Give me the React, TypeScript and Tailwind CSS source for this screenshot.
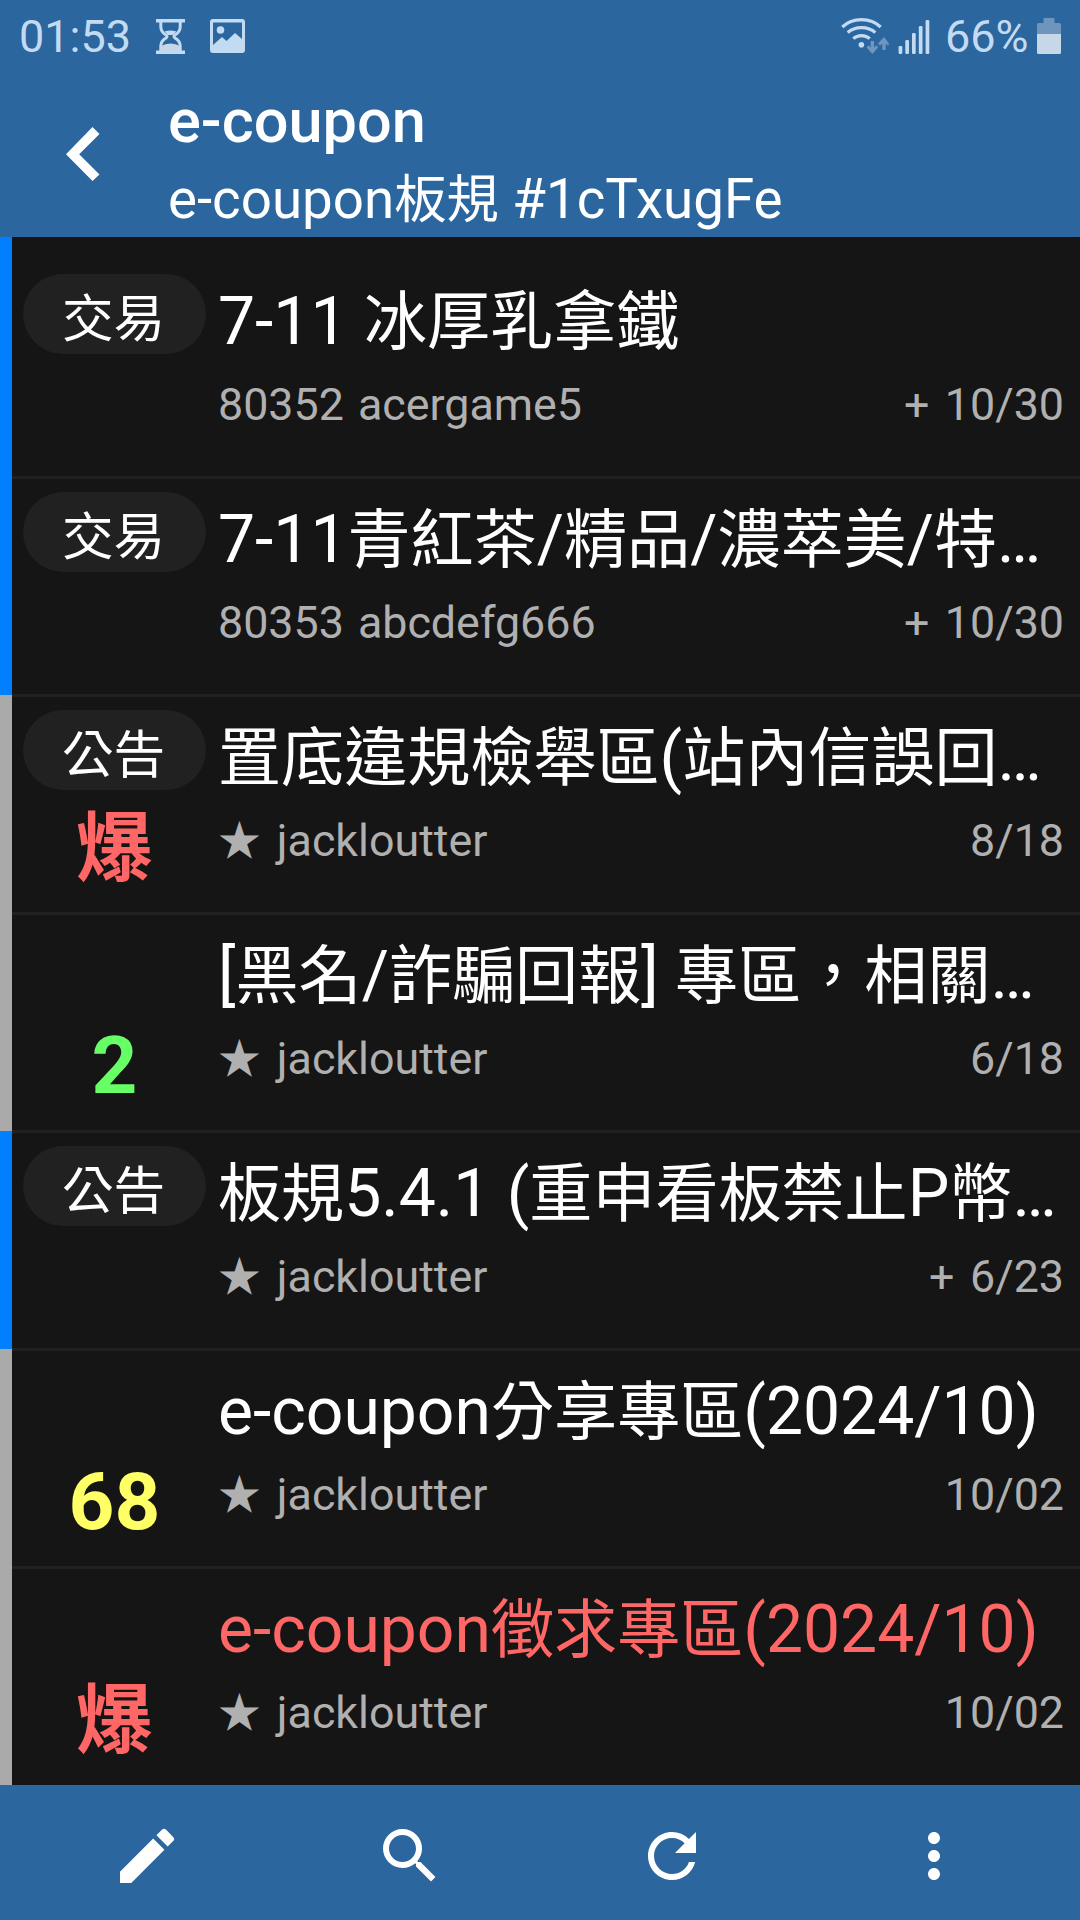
import React from 'react';
import { MdEdit, MdMoreVert, MdRefresh, MdSearch } from 'react-icons/md';

type Post = {
  tag?: string;
  title: string;
  number?: string;
  author: string;
  date: string;
  plus?: boolean;
  score?: string;
  scoreClass?: string;
  titleClass?: string;
};

const posts: Post[] = [
  { tag: '交易', title: '7-11 冰厚乳拿鐵', number: '80352', author: 'acergame5', date: '10/30', plus: true },
  { tag: '交易', title: '7-11青紅茶/精品/濃萃美/特…', number: '80353', author: 'abcdefg666', date: '10/30', plus: true },
  { tag: '公告', title: '置底違規檢舉區(站內信誤回…', author: 'jackloutter', date: '8/18', score: '爆', scoreClass: 'text-[#ff6666]' },
  { title: '[黑名/詐騙回報] 專區，相關…', author: 'jackloutter', date: '6/18', score: '2', scoreClass: 'text-[#66ff66]' },
  { tag: '公告', title: '板規5.4.1 (重申看板禁止P幣…', author: 'jackloutter', date: '6/23', plus: true },
  { title: 'e-coupon分享專區(2024/10)', author: 'jackloutter', date: '10/02', score: '68', scoreClass: 'text-[#ffff66]' },
  { title: 'e-coupon徵求專區(2024/10)', author: 'jackloutter', date: '10/02', score: '爆', scoreClass: 'text-[#ff6666]', titleClass: 'text-[#ff6666]' },
];

// Chinese runs are set slightly smaller than the Latin text around them.
function Mixed({ text }: { text: string }) {
  const parts = text.split(/([\u3000-\u9fff\uff00-\uffef★]+)/).filter(Boolean);
  return (
    <>
      {parts.map((part, i) =>
        /[\u3000-\u9fff\uff00-\uffef★]/.test(part) ? (
          <span key={i} className="text-[0.956em] leading-[0]">{part}</span>
        ) : (
          <React.Fragment key={i}>{part}</React.Fragment>
        ),
      )}
    </>
  );
}

function StatusBar() {
  return (
    <div className="flex h-[72px] items-start justify-between pr-[19px] pl-[19px] text-[45px] leading-[56px] text-[#c3dbf2]">
      <div className="flex pt-[9px]">
        <span className="w-[137px]">01:53</span>
        <svg className="mt-[10px] h-[35px] w-[29px]" viewBox="0 0 29 35" fill="none">
          <path d="M0 0H29V3.500H0ZM0 31.500H29V35H0Z" fill="currentColor" />
          <path d="M4.800 3V8Q5 13 10 16Q12 17.500 10 19Q4.800 22 4.800 27V32M24.200 3V8Q24 13 19 16Q17 17.500 19 19Q24.200 22 24.200 27V32" stroke="currentColor" strokeWidth="3" />
          <path d="M8.500 12.500Q14.500 10.500 20.500 12.500L17 16H12Z" fill="currentColor" />
          <path d="M5 33V27Q9 24.500 14.500 24.500Q20 24.500 24 27V33Z" fill="#c6d8e8" />
        </svg>
        <svg className="mt-[10px] ml-[25px] h-[34px] w-[35px]" viewBox="0 0 35 34">
          <path fillRule="evenodd" fill="currentColor" d="M3 0H32Q35 0 35 3V31Q35 34 32 34H3Q0 34 0 31V3Q0 0 3 0ZM3 3.500V26L12 18L16.500 22L25 14L32 20V3.500Z" />
          <circle cx="10.500" cy="11" r="3.800" fill="currentColor" />
        </svg>
      </div>
      <div className="flex pt-[9px]">
        <svg className="mt-[9px] h-[37px] w-[48px]" viewBox="841 18 48 37" fill="none">
          <g stroke="currentColor" strokeWidth="3.2">
            <path d="M842.300 27Q850 19.600 861.500 19.600T880.700 27" />
            <path d="M847.700 32.700Q853 27.600 861.500 27.600T875.300 32.700" />
            <path d="M853.300 38.700Q856.500 35.600 861.500 35.600T869.700 38.700" />
          </g>
          <circle cx="861.400" cy="44.700" r="2.800" fill="currentColor" />
          <path fill="#6f97be" d="M870.600 41H874V47.500L876.300 45.300L878 47.500L872.300 54L866.700 47.500L868.400 45.300L870.600 47.500ZM882.300 50H885.700V43.500L888 45.700L889 43.500L884 37L878 43.500L880 45.700L882.300 43.500Z" />
        </svg>
        <svg className="mt-[11px] ml-[9px] h-[34px] w-[32px]" viewBox="898 20 32 34" fill="currentColor">
          <rect x="898.600" y="46" width="3.700" height="8" rx="1.200" />
          <rect x="905.300" y="40" width="3.700" height="14" rx="1.200" />
          <rect x="912" y="33" width="3.700" height="21" rx="1.200" />
          <rect x="918.800" y="26" width="3.700" height="28" rx="1.200" />
          <rect x="925.600" y="20" width="3.700" height="34" rx="1.200" />
        </svg>
        <span className="ml-[15px] w-[92px]">66%</span>
        <svg className="mt-[9px] h-[36px] w-[24px]" viewBox="0 0 24 36">
          <path d="M6.500 0H17.500V5H22.500Q24 5 24 6.500V16H0V6.500Q0 5 1.500 5H6.500Z" fill="#6d95bd" />
          <path d="M0 16H24V34.500Q24 36 22.500 36H1.500Q0 36 0 34.500Z" fill="#c6d8e8" />
        </svg>
      </div>
    </div>
  );
}

function PostRow({ post, first }: { post: Post; first: boolean }) {
  return (
    <article className={first ? 'flex h-[239px] pt-6' : 'flex h-[218px] border-t-[3px] border-[#212121]'}>
      <div className="ml-[11px] flex w-[183px] shrink-0 flex-col items-center pt-[13px]">
        {post.tag ? (
          <div className="h-20 w-full rounded-full bg-[#212121] pt-[5px] pr-[2px] text-center text-[54px] leading-[80px] text-white">
            <Mixed text={post.tag} />
          </div>
        ) : (
          <div className="h-20" />
        )}
        {post.score && (
          <div className={`mt-[18px] text-[80px] leading-[80px] font-bold ${post.scoreClass}`}>
            <Mixed text={post.score} />
          </div>
        )}
      </div>
      <div className="ml-[12px] min-w-0 flex-1 pt-[21.4px] pr-[16px]">
        <h2 className={`h-20 text-[66px] leading-[80px] whitespace-nowrap ${post.titleClass ?? 'text-white'}`}>
          <Mixed text={post.title} />
        </h2>
        <div className="mt-[15px] flex justify-between text-[44.800px] leading-[56px] text-[#b0b0b0]">
          <div className={post.number ? 'flex gap-[14px]' : 'flex gap-[16px]'}>
            <span><Mixed text={post.number ?? '★'} /></span>
            <span>{post.author}</span>
          </div>
          <div className="flex gap-[15.500px]">
            {post.plus && <span>+</span>}
            <span>{post.date}</span>
          </div>
        </div>
      </div>
    </article>
  );
}

export default function App() {
  return (
    <div lang="zh-Hant" className="flex h-[1920px] w-[1080px] flex-col overflow-hidden bg-[#151515] font-[Roboto,'Noto_Sans_CJK_TC',sans-serif]">
      <header className="h-[237px] shrink-0 bg-[#2b669e] text-white">
        <StatusBar />
        <div className="flex h-[165px]">
          <svg className="mt-[55px] ml-[66px] h-[54px] w-[34px]" viewBox="0 0 34 54" fill="currentColor">
            <path d="M26.500 0L33.500 7L13.200 27.300L33.500 47.500L26.500 54L0 27.300Z" />
          </svg>
          <div className="ml-[68px] pt-[13px]">
            <h1 className="text-[61.300px] leading-[72px] font-medium">e-coupon</h1>
            <p className="mt-[9.500px] text-[54.700px] leading-[64px]">
              <Mixed text="e-coupon板規 #1cTxugFe" />
            </p>
          </div>
        </div>
      </header>

      <main className="flex h-[1548px] shrink-0">
        <div className="flex w-3 shrink-0 flex-col">
          <div className="h-[458px] bg-[#007fff]" />
          <div className="h-[436px] bg-[#aaaaaa]" />
          <div className="h-[218px] bg-[#007fff]" />
          <div className="h-[436px] bg-[#aaaaaa]" />
        </div>
        <section className="min-w-0 flex-1">
          {posts.map((post, i) => (
            <PostRow key={i} post={post} first={i === 0} />
          ))}
        </section>
      </main>

      <nav className="flex h-[135px] shrink-0 bg-[#2b669e] pt-[35px] pr-[14.500px] pl-[16px] text-[72px] text-white">
        <button className="flex flex-1 justify-center" aria-label="Compose"><MdEdit /></button>
        <button className="flex flex-1 justify-center" aria-label="Search"><MdSearch /></button>
        <button className="flex flex-1 justify-center" aria-label="Refresh"><MdRefresh /></button>
        <button className="flex flex-1 justify-center" aria-label="More"><MdMoreVert /></button>
      </nav>
    </div>
  );
}
